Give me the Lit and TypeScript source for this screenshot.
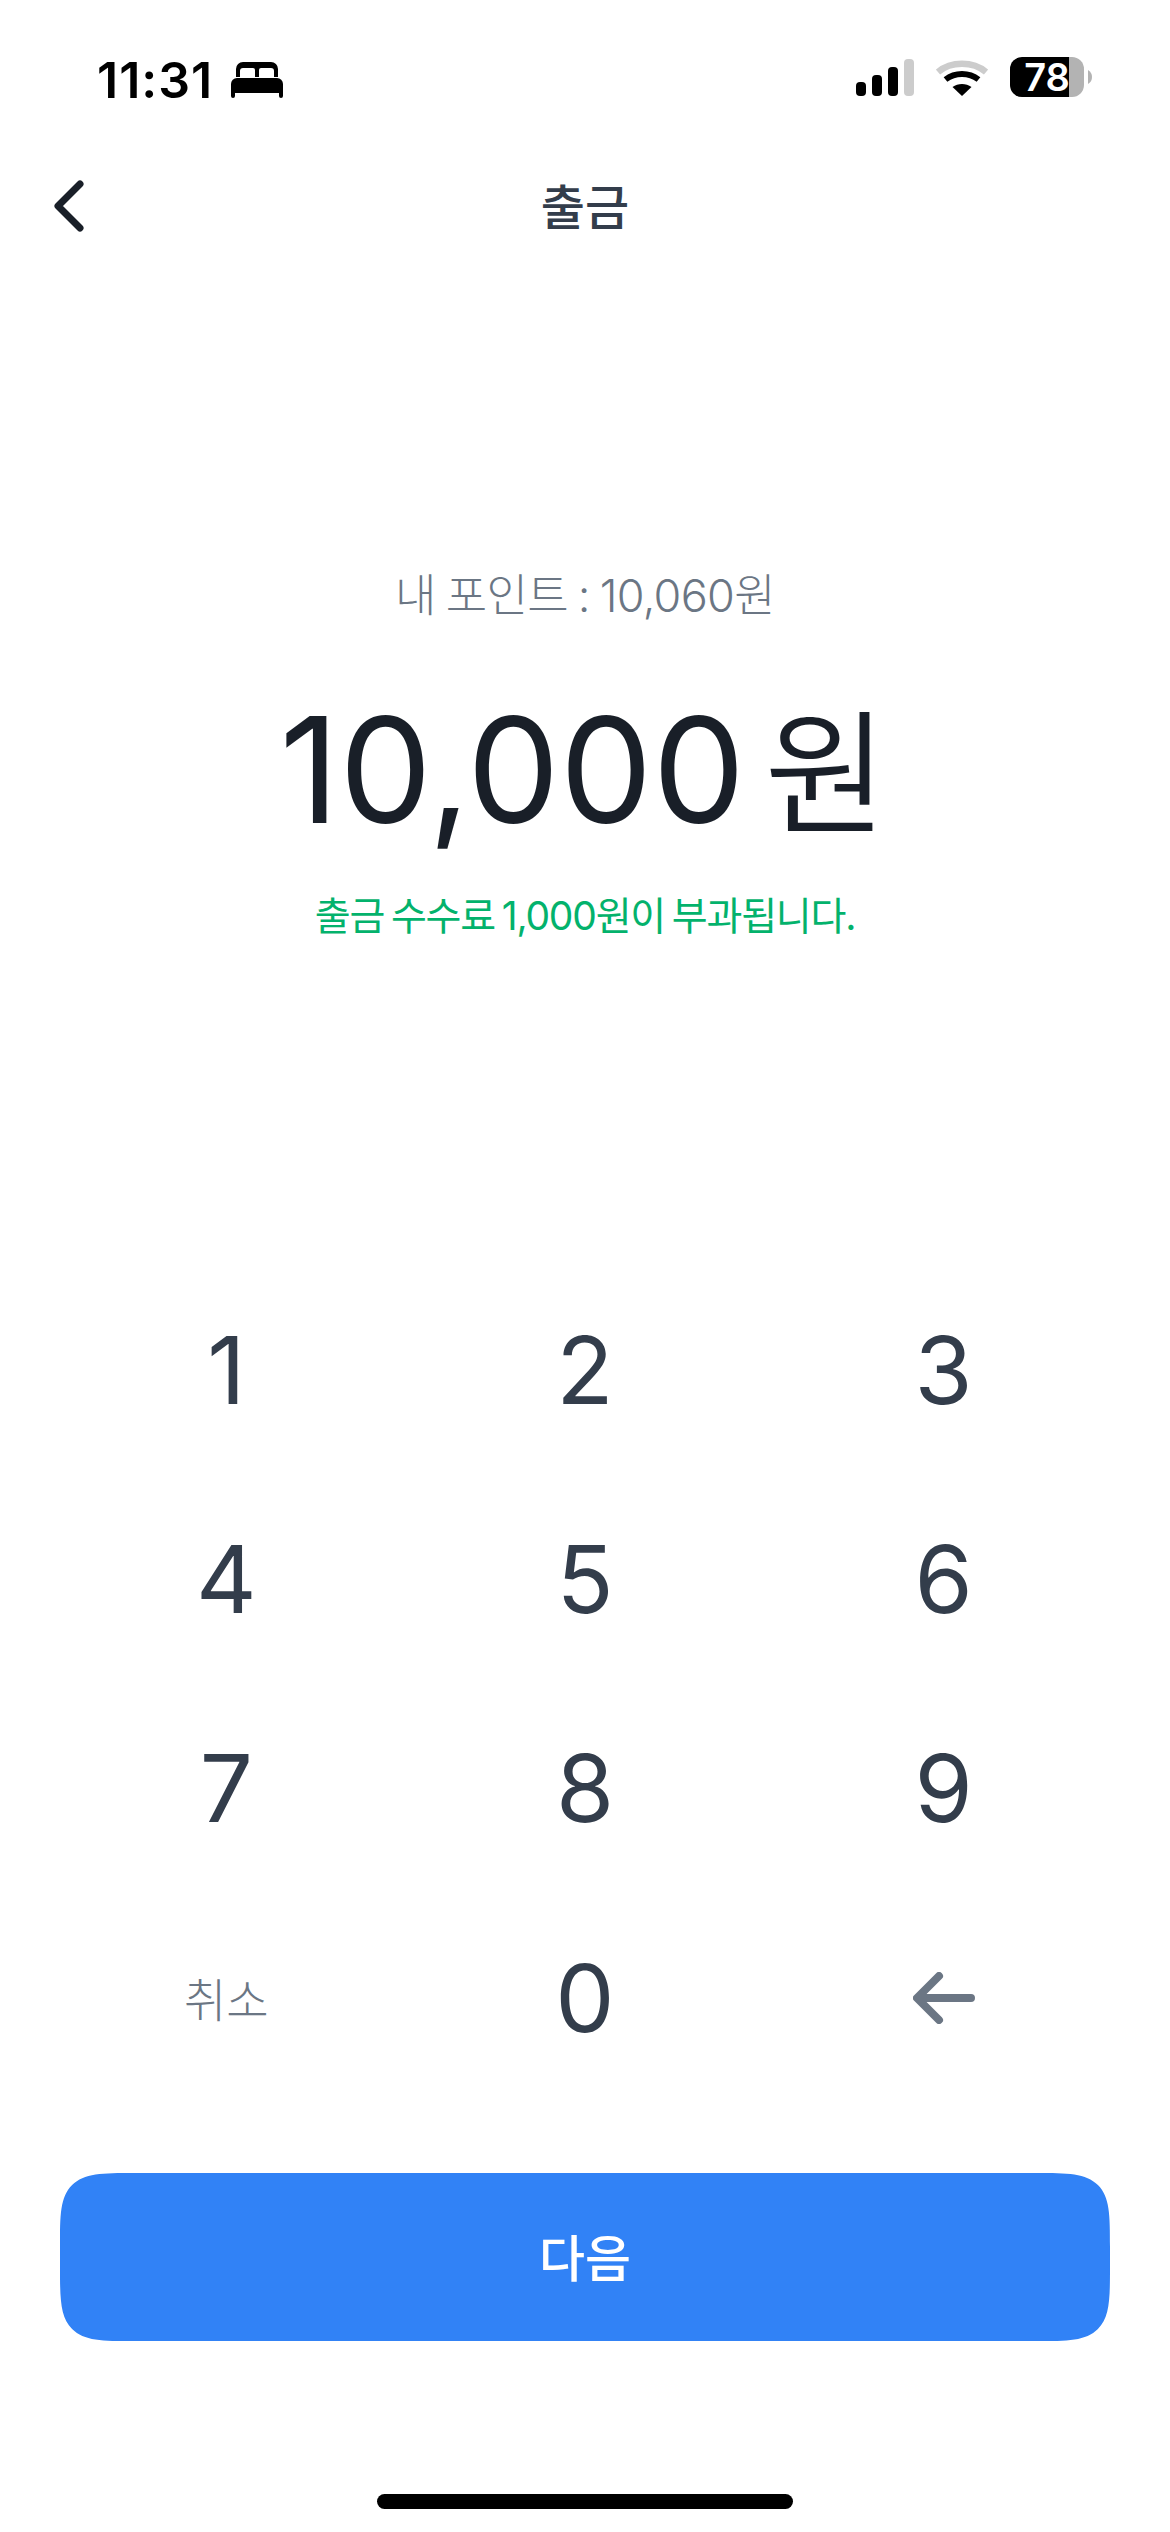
import { LitElement, html, css } from "lit";
import { customElement } from "lit/decorators.js";

@customElement("app-root")
export class AppRoot extends LitElement {
  static styles = css`
    :host { display: block; width: 1170px; height: 2532px; background: #fff; font-family: Inter, "Noto Sans CJK KR", sans-serif; overflow: hidden; }
    .screen { display: flex; flex-direction: column; height: 2532px; }
    .status { height: 150px; flex: none; display: flex; align-items: flex-start; justify-content: space-between; padding: 55px 78px 0 97px; box-sizing: border-box; }
    .left { display: flex; align-items: center; gap: 18px; }
    .time { font-size: 50px; line-height: 50px; font-weight: 600; color: #000; letter-spacing: 1px; }
    .bed { width: 52px; height: 36px; display: block; }
    .indicators { display: flex; align-items: center; gap: 22px; padding-top: 2px; }
    .indicators svg { display: block; }
    .battery { position: relative; width: 82px; height: 40px; }
    .battery svg { position: absolute; inset: 0; }
    .pct { position: absolute; left: 0; width: 74px; top: 0; height: 40px; line-height: 40px; text-align: center; color: #fff; font-size: 38px; font-weight: 600; }
    .nav { height: 112px; flex: none; display: grid; grid-template-columns: 1fr auto 1fr; align-items: center; padding: 0 54px; }
    .nav svg { display: block; }
    .title { font-size: 48px; font-weight: 500; color: #333d4b; padding-bottom: 4px; }
    .summary { height: 1004px; flex: none; display: flex; flex-direction: column; align-items: center; box-sizing: border-box; padding-top: 304px; }
    .points { font-size: 45px; line-height: 60px; font-weight: 300; color: #6b7684; letter-spacing: -0.7px; word-spacing: -2px; }
    .amount { margin-top: 54px; padding-right: 3px; font-size: 147px; line-height: 180px; font-weight: 400; color: #191f28; white-space: nowrap; display: flex; align-items: baseline; gap: 19px; }
    .won { font-size: 134px; font-weight: 350; }
    .fee { margin-top: 22px; font-size: 39px; line-height: 60px; font-weight: 400; color: #03b26c; letter-spacing: -1.2px; word-spacing: -3px; }
    .keypad { flex: none; display: grid; grid-template-columns: repeat(3, 358.67px); grid-auto-rows: 209.3px; padding: 0 47px; }
    .key { display: flex; align-items: center; justify-content: center; font-size: 94px; font-weight: 400; color: #333d4b; padding-bottom: 2px; box-sizing: border-box; }
    .key.cancel { font-size: 46px; font-weight: 300; color: #6b7684; padding-bottom: 4px; }
    .action { margin: 70px 60px 0; height: 168px; flex: none; border-radius: 48px; background: #3182f6; color: #fff; display: flex; align-items: center; justify-content: center; font-size: 50px; font-weight: 500; padding-bottom: 4px; box-sizing: border-box; }
    @supports (corner-shape: squircle) {
      .action { border-radius: 76px; corner-shape: squircle; }
    }
    .home-wrap { flex: none; display: flex; justify-content: center; padding-top: 153px; }
    .home { width: 416px; height: 15px; border-radius: 8px; background: #000; }
  `;

  render() {
    const keys = ["1", "2", "3", "4", "5", "6", "7", "8", "9"];
    return html`<div class="screen">
      <div class="status">
        <div class="left">
          <span class="time">11:31</span>
          <svg class="bed" viewBox="0 0 52 36"><path fill="#000" d="M5 15V7a7 7 0 0 1 7-7h28a7 7 0 0 1 7 7v8h-4V9a3 3 0 0 0-3-3H30a2 2 0 0 0-2 2v7h-4V8a2 2 0 0 0-2-2H12a3 3 0 0 0-3 3v6z"/><path fill="#000" d="M6 16h40a6 6 0 0 1 6 6v12a2 2 0 0 1-4 0v-3H4v3a2 2 0 0 1-4 0V22a6 6 0 0 1 6-6z"/></svg>
        </div>
        <div class="indicators">
          <svg width="58" height="37" viewBox="0 0 58 37"><rect x="0" y="23" width="10" height="14" rx="4" fill="#000"/><rect x="16" y="16" width="10" height="21" rx="4" fill="#000"/><rect x="32" y="8" width="10" height="29" rx="4" fill="#000"/><rect x="48" y="0" width="10" height="37" rx="4" fill="#ccc"/></svg>
          <svg width="52" height="38" viewBox="0 0 52 38"><path d="M2 14C15 3 37 3 50 14" fill="none" stroke="#ccc" stroke-width="6.5"/><path d="M9.5 21.5C19 14 33 14 42.500 21.500" fill="none" stroke="#000" stroke-width="6"/><path d="M16.500 29C22 25 30 25 35.500 29L26 38z" fill="#000"/></svg>
          <div class="battery">
            <svg width="82" height="40" viewBox="0 0 82 40"><path d="M12 0H59V40H12A12 12 0 0 1 0 28V12A12 12 0 0 1 12 0z" fill="#000"/><path d="M59 0H62A12 12 0 0 1 74 12V28A12 12 0 0 1 62 40H59z" fill="#b3b3b3"/><path d="M78 13C81 15 82 17 82 20S81 25 78 27z" fill="#b3b3b3"/></svg>
            <span class="pct">78</span>
          </div>
        </div>
      </div>
      <div class="nav">
        <svg width="30" height="52" viewBox="0 0 30 52"><path d="M26 4L4 26L26 48" fill="none" stroke="#191f28" stroke-width="7" stroke-linecap="round" stroke-linejoin="round"/></svg>
        <div class="title">출금</div>
        <div></div>
      </div>
      <div class="summary">
        <div class="points">내 포인트 : 10,060원</div>
        <div class="amount"><span>10,000</span><span class="won">원</span></div>
        <div class="fee">출금 수수료 1,000원이 부과됩니다.</div>
      </div>
      <div class="keypad">
        ${keys.map((k) => html`<div class="key">${k}</div>`)}
        <div class="key cancel">취소</div>
        <div class="key">0</div>
        <div class="key">
          <svg width="62" height="52" viewBox="0 0 62 52"><path d="M58 26H5M26 4L4 26L26 48" fill="none" stroke="#6b7684" stroke-width="8" stroke-linecap="round" stroke-linejoin="round"/></svg>
        </div>
      </div>
      <div class="action">다음</div>
      <div class="home-wrap"><div class="home"></div></div>
    </div>`;
  }
}
